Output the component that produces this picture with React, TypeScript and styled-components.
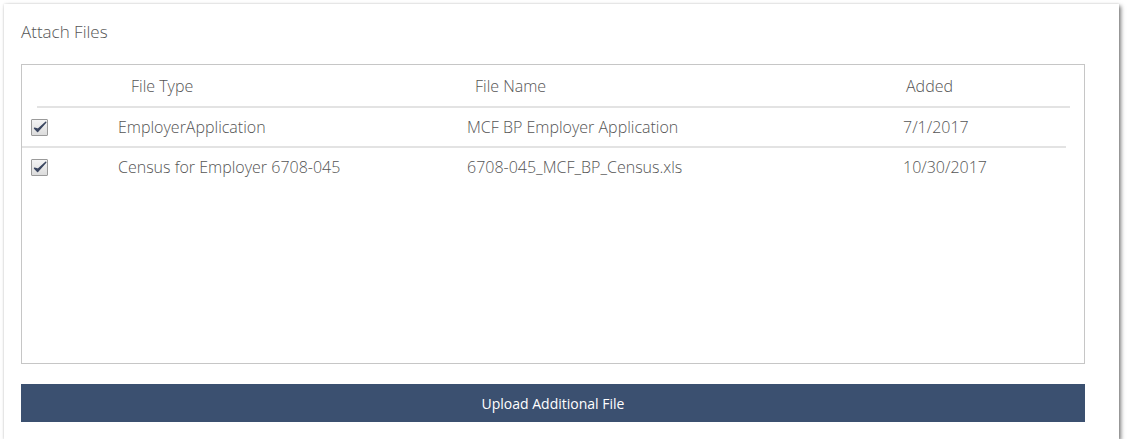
import React from 'react';
import styled, { createGlobalStyle } from 'styled-components';

type FileRow = {
  type: string;
  name: string;
  added: string;
};

const rows: FileRow[] = [
  { type: 'EmployerApplication', name: 'MCF BP Employer Application', added: '7/1/2017' },
  { type: 'Census for Employer 6708-045', name: '6708-045_MCF_BP_Census.xls', added: '10/30/2017' },
];

const GlobalStyle = createGlobalStyle`
  html, body {
    margin: 0;
    padding: 0;
    background: #ffffff;
  }

  body {
    font-family: "Open Sans", "Liberation Sans", sans-serif;
    color: #555555;
  }
`;

const Page = styled.div`
  padding: 4px 0 0 4px;
`;

const Card = styled.div`
  width: 1115px;
  height: 435px;
  box-sizing: border-box;
  padding: 17px 34px 0 17px;
  background: #ffffff;
  box-shadow: 2px 2px 4px rgba(0, 0, 0, 0.5), 0 0 2px rgba(0, 0, 0, 0.12);
  display: flex;
  flex-direction: column;
`;

const Title = styled.h2`
  margin: 0 0 21px;
  height: 22px;
  line-height: 22px;
  font-size: 17px;
  font-weight: 300;
  color: #555555;
`;

const TableBox = styled.div`
  height: 300px;
  box-sizing: border-box;
  border: 1px solid #c6c6c6;
`;

const HeaderRow = styled.div`
  display: grid;
  grid-template-columns: 94px 344px 431px 1fr;
  align-items: center;
  height: 41px;
  margin: 0 14px 0 15px;
  border-bottom: 2px solid #e3e3e3;
  font-size: 16px;
  font-weight: 300;
`;

const HeaderCell = styled.div`
  white-space: nowrap;
`;

const Row = styled.div<{ $last?: boolean }>`
  display: grid;
  grid-template-columns: 96px 349px 436px 1fr;
  align-items: center;
  height: 38px;
  margin-right: 18px;
  border-bottom: 2px solid ${({ $last }) => ($last ? 'transparent' : '#e3e3e3')};
  font-size: 16px;
  font-weight: 300;
`;

const Cell = styled.div`
  white-space: nowrap;
`;

const CheckCell = styled.div`
  padding-left: 9px;
  display: flex;
  align-items: center;
`;

const CheckBox = styled.span`
  width: 15px;
  height: 15px;
  border: 1px solid #9a9a9a;
  border-radius: 1px;
  background: linear-gradient(#f4f4f4, #dcdcdc);
  display: flex;
  align-items: center;
  justify-content: center;
`;

const UploadButton = styled.button`
  margin-top: 20px;
  height: 38px;
  border: none;
  background: #3b5070;
  color: #ffffff;
  font-family: "Open Sans", "Liberation Sans", sans-serif;
  font-size: 14px;
  font-weight: 500;
  cursor: pointer;
`;

function CheckMark() {
  return (
    <svg width="14" height="13" viewBox="0 0 14 13">
      <path d="M1.5 7.2 L4.6 10.6 L12.8 1.2 L5 8.2 Z" fill="#3a4660" stroke="#3a4660" strokeWidth="1.4" strokeLinejoin="round" />
    </svg>
  );
}

export default function App() {
  return (
    <Page>
      <GlobalStyle />
      <Card>
        <Title>Attach Files</Title>
        <TableBox>
          <HeaderRow>
            <span />
            <HeaderCell>File Type</HeaderCell>
            <HeaderCell>File Name</HeaderCell>
            <HeaderCell>Added</HeaderCell>
          </HeaderRow>
          {rows.map((row, i) => (
            <Row key={row.name} $last={i === rows.length - 1}>
              <CheckCell>
                <CheckBox>
                  <CheckMark />
                </CheckBox>
              </CheckCell>
              <Cell>{row.type}</Cell>
              <Cell>{row.name}</Cell>
              <Cell>{row.added}</Cell>
            </Row>
          ))}
        </TableBox>
        <UploadButton>Upload Additional File</UploadButton>
      </Card>
    </Page>
  );
}
